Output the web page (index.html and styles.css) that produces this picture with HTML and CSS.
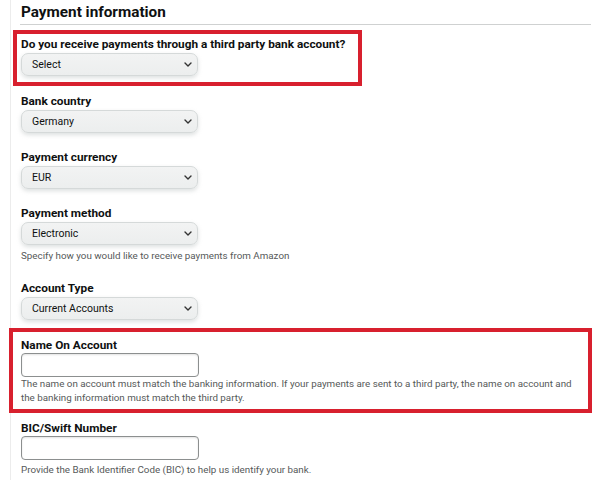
FILE: index.html
```html
<!DOCTYPE html>
<html lang="en">
<head>
<meta charset="utf-8">
<title>Payment information</title>
<link rel="stylesheet" href="styles.css">
</head>
<body>
<div class="page">
  <h2 class="heading">Payment information</h2>

  <div class="mark mark-one">
    <div class="field">
      <div class="label">Do you receive payments through a third party bank account?</div>
      <div class="select"><span>Select</span><svg class="chev" viewBox="0 0 8 5" width="8" height="5"><path d="M1 1 L4 4 L7 1" fill="none" stroke="#333" stroke-width="1.4" stroke-linecap="round" stroke-linejoin="round"/></svg></div>
    </div>
  </div>

  <div class="field">
    <div class="label">Bank country</div>
    <div class="select"><span>Germany</span><svg class="chev" viewBox="0 0 8 5" width="8" height="5"><path d="M1 1 L4 4 L7 1" fill="none" stroke="#333" stroke-width="1.4" stroke-linecap="round" stroke-linejoin="round"/></svg></div>
  </div>

  <div class="field">
    <div class="label">Payment currency</div>
    <div class="select"><span>EUR</span><svg class="chev" viewBox="0 0 8 5" width="8" height="5"><path d="M1 1 L4 4 L7 1" fill="none" stroke="#333" stroke-width="1.4" stroke-linecap="round" stroke-linejoin="round"/></svg></div>
  </div>

  <div class="field">
    <div class="label">Payment method</div>
    <div class="select"><span>Electronic</span><svg class="chev" viewBox="0 0 8 5" width="8" height="5"><path d="M1 1 L4 4 L7 1" fill="none" stroke="#333" stroke-width="1.4" stroke-linecap="round" stroke-linejoin="round"/></svg></div>
    <div class="help">Specify how you would like to receive payments from Amazon</div>
  </div>

  <div class="field field-after-help">
    <div class="label">Account Type</div>
    <div class="select"><span>Current Accounts</span><svg class="chev" viewBox="0 0 8 5" width="8" height="5"><path d="M1 1 L4 4 L7 1" fill="none" stroke="#333" stroke-width="1.4" stroke-linecap="round" stroke-linejoin="round"/></svg></div>
  </div>

  <div class="mark mark-two">
    <div class="field">
      <div class="label label-input">Name On Account</div>
      <div class="input"></div>
      <div class="help help-tight">The name on account must match the banking information. If your payments are sent to a third party, the name on account and the banking information must match the third party.</div>
    </div>
  </div>

  <div class="field">
    <div class="label label-input">BIC/Swift Number</div>
    <div class="input"></div>
    <div class="help help-bic">Provide the Bank Identifier Code (BIC) to help us identify your bank.</div>
  </div>
</div>
</body>
</html>
```

FILE: styles.css
```css
* { box-sizing: border-box; }

html, body {
  margin: 0;
  padding: 0;
  background: #ffffff;
}

body {
  font-family: Roboto, "Liberation Sans", sans-serif;
  color: #0f1111;
  width: 598px;
  height: 480px;
  overflow: hidden;
}

.page {
  margin-left: 10px;
  width: 581px;
  border-left: 1px solid #ececec;
  padding-left: 10px;
  min-height: 480px;
}

.heading {
  margin: 0 0 0 -1px;
  padding: 2px 0 0 1px;
  font-size: 15.3px;
  line-height: 20px;
  font-weight: 700;
  color: #0f1111;
  height: 25px;
  border-bottom: 1px solid #cfd1d1;
}

.mark {
  border: 4px solid #d8202e;
}

.mark-one {
  margin-top: 5px;
  margin-left: -8px;
  width: 349px;
  padding: 2px 0 6px 4px;
}

.mark-two {
  margin-top: 8px;
  margin-left: -12px;
  width: 583px;
  padding: 5px 6px 4px 8px;
}

.field { margin-top: 16px; }

.mark .field { margin-top: 0; }

.mark-one + .field { margin-top: 7px; }

.field-after-help { margin-top: 17px; }

.mark-two + .field { margin-top: 7px; }

.label {
  font-size: 11.8px;
  line-height: 16px;
  font-weight: 700;
  margin-bottom: 1px;
  white-space: nowrap;
}

.label-input { margin-bottom: 0; }

.select {
  width: 177px;
  height: 23px;
  display: flex;
  align-items: center;
  justify-content: space-between;
  padding: 0 4px 0 10px;
  background: linear-gradient(#f2f3f3, #eceeee);
  border: 1px solid #d5d9d9;
  border-radius: 7px;
  box-shadow: 0 2px 4px rgba(180, 186, 186, 0.45);
  font-size: 10.5px;
  color: #0f1111;
}

.chev { display: block; margin-right: 1px; }

.input {
  width: 178px;
  height: 24px;
  background: #fff;
  border: 1px solid #8c8f8f;
  border-radius: 4px;
  box-shadow: inset 0 1px 2px rgba(15, 17, 17, 0.12);
}

.help {
  font-size: 9.8px;
  line-height: 14px;
  color: #565959;
  margin-top: 4px;
}

.help-tight { margin-top: 0; }

.help-bic { margin-top: 3px; }
```
